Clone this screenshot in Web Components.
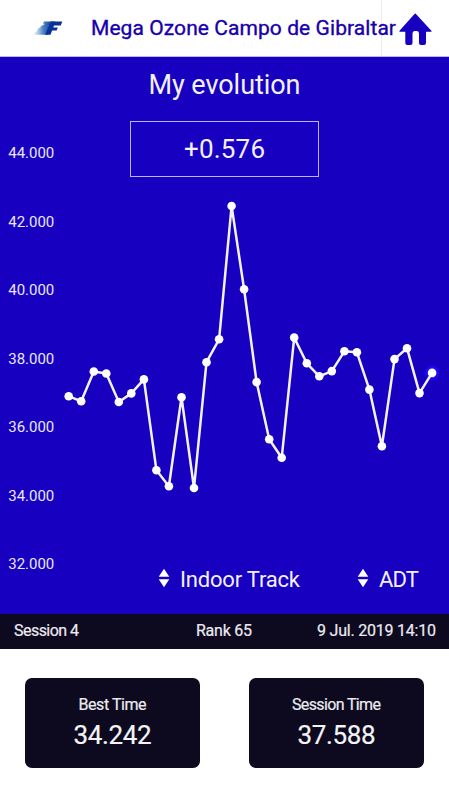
<!DOCTYPE html>
<html lang="en">
<head>
<meta charset="utf-8">
<meta name="viewport" content="width=device-width, initial-scale=1">
<title>My evolution</title>
<style>
	body {
		background: #fff;
		font-family: Roboto, "Open Sans", sans-serif;
		margin: 0;
	}
</style>
</head>
<body>
<evolution-app></evolution-app>

<script>
class FitText extends HTMLElement {
	constructor() {
		super();
		this.attachShadow({mode:'open'});
		this.shadowRoot.innerHTML = `
			<style>
			:host { display: block; flex: none; white-space: nowrap; }
			span { display: inline-block; }
			</style>
			<span><slot></slot></span>
		`;
	}

	// spread the letters so that the text fills the given width
	connectedCallback() {
		const width = Number(this.getAttribute('width'));
		const span = this.shadowRoot.querySelector('span');
		const natural = span.getBoundingClientRect().width;
		span.style.letterSpacing = `${(width - natural) / (this.textContent.length - 1)}px`;
		this.style.width = `${width}px`;
	}
}

class AppHeader extends HTMLElement {
	constructor() {
		super();
		this.attachShadow({mode:'open'});
		this.shadowRoot.innerHTML = `
			<style>
			:host {
				background: linear-gradient(#ebebf1, #ebebf1) 381px 0 / 1px 100% no-repeat #fff;
				border-bottom: 1px solid #b9b7ec;
				box-sizing: border-box;
				color: #1700ad;
				display: flex;
				font-size: 21px;
				height: 57px;
				line-height: 57px;
				-webkit-text-stroke: .35px;
			}
			svg { display: block; flex: none; }
			.logo { margin: 19px 27px 0 33px; }
			.home { margin: 12px 0 0 1px; }
			</style>
			<svg class="logo" width="31" height="18" viewBox="0 0 31 18">
				<defs>
					<linearGradient id="speed" gradientUnits="userSpaceOnUse" x1="1" x2="19">
						<stop offset="0" stop-color="#8cc0de" stop-opacity=".25"/>
						<stop offset=".5" stop-color="#4f86c4"/>
						<stop offset="1" stop-color="#0a3a9c"/>
					</linearGradient>
				</defs>
				<path fill="url(#speed)" d="M11 2.500H22V4.700H10zM12 4.700H20V6.700H9zM8 6.700H19V8.700H7zM6 8.700H19V10.700H4zM5 10.700H18V12.700H3zM3 12.700H16V14.200H1zM2 14.200H15V15.700H0z"/>
				<path fill="#073296" d="M18 2.500H29.300L27.800 6.600H21L20.300 8.400H24.800L23.600 11.500H19.100L17.500 15.700H12z"/>
			</svg>
			<slot></slot>
			<svg class="home" width="36" height="36" viewBox="0 0 36 36">
				<path fill="#1700bf" d="M18.500 1.500L34.600 19Q35 19.700 34 19.700H29V31Q29 33 27 33H24Q22 33 22 31V21.500Q22 19 20 19H17.500Q15.500 19 15.500 21.500V31Q15.500 33 13.500 33H10.300Q8.300 33 8.300 31V19.700H3Q1.800 19.700 2.500 18.800L17.500 2Q18 1.200 18.500 1.500z"/>
			</svg>
		`;
	}
}

class TimeChart extends HTMLElement {
	top = 95.5;
	max = 44;
	unit = 34.27;
	left = 68.7;
	step = 12.53;
	times = [
		36.89, 36.74, 37.61, 37.55, 36.72, 36.97, 37.38, 34.73, 34.26, 36.86,
		34.21, 37.88, 38.55, 42.44, 40.01, 37.30, 35.63, 35.09, 38.60, 37.85,
		37.47, 37.62, 38.20, 38.17, 37.08, 35.43, 37.97, 38.29, 36.98, 37.57
	];

	constructor() {
		super();
		this.attachShadow({mode:'open'});
		const points = this.times.map((time, i) => [
			(this.left + i * this.step).toFixed(1),
			this.y(time).toFixed(1)
		]);
		const last = points[points.length - 1];
		const labels = [44, 42, 40, 38, 36, 34, 32].map(value =>
			`<text x="8.300" y="${this.y(value) + 5.5}" textLength="46" lengthAdjust="spacing">${value}.000</text>`
		).join('');

		this.shadowRoot.innerHTML = `
			<style>
			:host { display: block; }
			svg { display: block; }
			text { fill: #e9e7ff; font-size: 15px; }
			polyline { fill: none; stroke: #f4f2ff; stroke-linejoin: round; stroke-width: 2.500; }
			circle { fill: #fff; }
			.halo { fill: #1d0cf5; }
			.halo.wide { opacity: .5; }
			</style>
			<svg width="449" height="557" viewBox="0 0 449 557">
				${labels}
				<circle class="halo wide" cx="${last[0]}" cy="${last[1]}" r="8"/>
				<circle class="halo" cx="${last[0]}" cy="${last[1]}" r="6.500"/>
				<polyline points="${points.join(' ')}"/>
				${points.map(([x, y]) => `<circle cx="${x}" cy="${y}" r="4.300"/>`).join('')}
			</svg>
		`;
	}

	y(time) {
		return this.top + (this.max - time) * this.unit;
	}
}

class TrackPicker extends HTMLElement {
	constructor() {
		super();
		this.attachShadow({mode:'open'});
		this.shadowRoot.innerHTML = `
			<style>
			:host { align-items: center; display: flex; font-size: 22px; gap: 10px; line-height: 28px; }
			svg { display: block; margin-top: -4px; }
			</style>
			<svg width="12" height="20" viewBox="0 0 12 20">
				<path fill="#fff" d="M6 .8L11.300 8.800H.7zM.7 11.200H11.300L6 19.200z"/>
			</svg>
			<slot></slot>
		`;
	}
}

class EvolutionPanel extends HTMLElement {
	constructor() {
		super();
		this.attachShadow({mode:'open'});
		this.shadowRoot.innerHTML = `
			<style>
			:host {
				background: #1700bf;
				color: #f3f1ff;
				display: grid;
				height: 557px;
			}
			time-chart, .front { grid-area: 1 / 1; }
			.front { align-items: center; display: flex; flex-direction: column; }
			h1 { font-size: 27px; font-weight: 400; line-height: 32px; margin: 12px 0 20px; }
			.gain {
				border: 1px solid #bab5ff;
				box-sizing: border-box;
				display: flex;
				font-size: 26px;
				height: 56px;
				justify-content: center;
				line-height: 54px;
				width: 189px;
			}
			.pickers {
				align-self: stretch;
				display: flex;
				gap: 57px;
				margin: auto 0 20px 158px;
			}
			</style>
			<time-chart></time-chart>
			<div class="front">
				<h1><fit-text width="152">My evolution</fit-text></h1>
				<div class="gain"><fit-text width="81">+0.576</fit-text></div>
				<div class="pickers">
					<track-picker><fit-text width="120">Indoor Track</fit-text></track-picker>
					<track-picker><fit-text width="40">ADT</fit-text></track-picker>
				</div>
			</div>
		`;
	}
}

class SessionBar extends HTMLElement {
	constructor() {
		super();
		this.attachShadow({mode:'open'});
		this.shadowRoot.innerHTML = `
			<style>
			:host {
				background: #0d0a20;
				box-sizing: border-box;
				color: #eceaf0;
				display: grid;
				font-size: 16px;
				grid-template-columns: 182px 121px 1fr;
				height: 35px;
				line-height: 34px;
				padding-left: 14px;
				-webkit-text-stroke: .2px;
			}
			</style>
			<slot></slot>
		`;
	}
}

class TimeCard extends HTMLElement {
	constructor() {
		super();
		this.attachShadow({mode:'open'});
		this.shadowRoot.innerHTML = `
			<style>
			:host {
				align-items: center;
				background: #0d0a20;
				border-radius: 7px;
				box-sizing: border-box;
				color: #f4f4f6;
				display: flex;
				flex-direction: column;
				font-size: 26px;
				height: 90px;
				line-height: 34px;
				padding-top: 17px;
				width: 175px;
				-webkit-text-stroke: .2px;
			}
			.label { color: #ecebef; font-size: 16px; line-height: 20px; margin-bottom: 3px; }
			</style>
			<div class="label"><slot name="label"></slot></div>
			<slot></slot>
		`;
	}
}

class EvolutionApp extends HTMLElement {
	constructor() {
		super();
		this.attachShadow({mode:'open'});
		this.shadowRoot.innerHTML = `
			<style>
			:host { display: block; height: 800px; overflow: hidden; width: 449px; }
			.cards { display: flex; gap: 49px; padding: 29.400px 25px 0; }
			</style>
			<app-header><fit-text width="305">Mega Ozone Campo de Gibraltar</fit-text></app-header>
			<evolution-panel></evolution-panel>
			<session-bar>
				<fit-text width="65">Session 4</fit-text>
				<fit-text width="56">Rank 65</fit-text>
				<fit-text width="119">9 Jul. 2019 14:10</fit-text>
			</session-bar>
			<div class="cards">
				<time-card><fit-text slot="label" width="68">Best Time</fit-text><fit-text width="78">34.242</fit-text></time-card>
				<time-card><fit-text slot="label" width="89">Session Time</fit-text><fit-text width="78">37.588</fit-text></time-card>
			</div>
		`;
	}
}

customElements.define('app-header', AppHeader);
customElements.define('time-chart', TimeChart);
customElements.define('track-picker', TrackPicker);
customElements.define('evolution-panel', EvolutionPanel);
customElements.define('session-bar', SessionBar);
customElements.define('time-card', TimeCard);
customElements.define('evolution-app', EvolutionApp);
// last, once every text sits in a styled parent
customElements.define('fit-text', FitText);
</script>
</body>
</html>
